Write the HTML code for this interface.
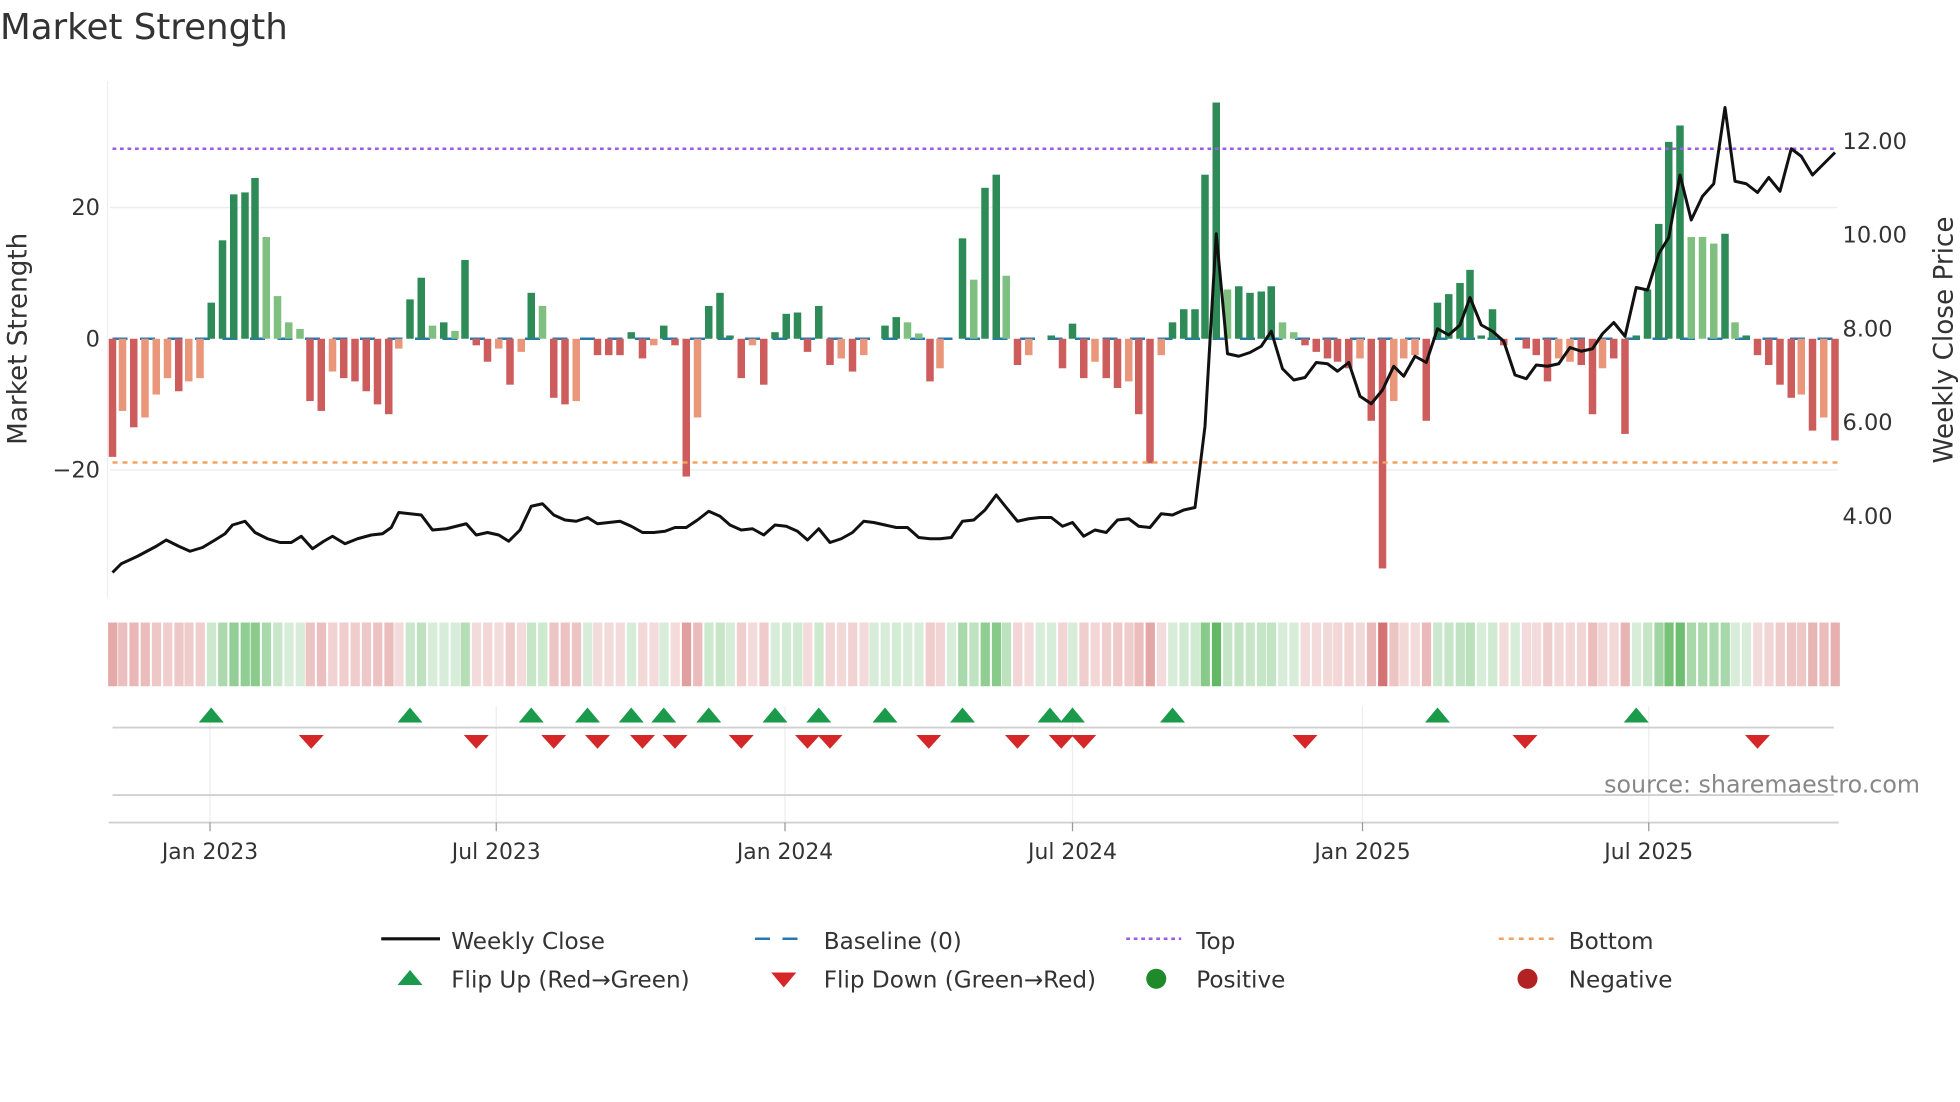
<!DOCTYPE html>
<html><head><meta charset="utf-8"><style>
html,body{margin:0;padding:0;background:#fff;}
svg{display:block;font-family:"DejaVu Sans","Liberation Sans",sans-serif;}
</style></head><body>
<svg id="s" width="1960" height="1102" viewBox="0 0 1568 881.6" xmlns="http://www.w3.org/2000/svg">
<rect width="1568" height="882" fill="#fff"/>
<text x="0" y="31" font-size="28.5" fill="#333">Market Strength</text>
<line x1="86" y1="65" x2="86" y2="478" stroke="#eee" stroke-width="1"/>
<line x1="88" y1="166" x2="1470" y2="166" stroke="#eee" stroke-width="1.2"/>
<line x1="88" y1="376" x2="1470" y2="376" stroke="#eee" stroke-width="1.2"/>
<line x1="90" y1="271" x2="1470" y2="271" stroke="#2878b0" stroke-width="2" stroke-dasharray="12,10"/>
<g id="bars"></g>
<line x1="90" y1="119" x2="1470" y2="119" stroke="#9b5de5" stroke-width="2" stroke-dasharray="3,3"/>
<line x1="90" y1="370" x2="1470" y2="370" stroke="#f4a261" stroke-width="2" stroke-dasharray="4,4"/>
<polyline id="price" fill="none" stroke="#111" stroke-width="2.4" stroke-linejoin="round"/>
<g font-size="18" fill="#333">
<text x="80" y="172" text-anchor="end">20</text>
<text x="80" y="277" text-anchor="end">0</text>
<text x="80" y="382" text-anchor="end">−20</text>
<text x="1474" y="119">12.00</text>
<text x="1474" y="194">10.00</text>
<text x="1474" y="269">8.00</text>
<text x="1474" y="344">6.00</text>
<text x="1474" y="419">4.00</text>
</g>
<text transform="translate(21,271) rotate(-90)" font-size="21" fill="#333" text-anchor="middle">Market Strength</text>
<text transform="translate(1562,272) rotate(-90)" font-size="21" fill="#333" text-anchor="middle">Weekly Close Price</text>
<g id="heat"></g>
<g stroke="#eee" stroke-width="1">
<line x1="168" y1="565" x2="168" y2="658"/><line x1="397" y1="565" x2="397" y2="658"/>
<line x1="628" y1="565" x2="628" y2="658"/><line x1="858" y1="565" x2="858" y2="658"/>
<line x1="1090" y1="565" x2="1090" y2="658"/><line x1="1319" y1="565" x2="1319" y2="658"/>
</g>
<line x1="90" y1="582" x2="1467" y2="582" stroke="#d0d0d0" stroke-width="1.5"/>
<line x1="90" y1="636" x2="1467" y2="636" stroke="#d0d0d0" stroke-width="1.5"/>
<line x1="87" y1="658" x2="1471" y2="658" stroke="#d0d0d0" stroke-width="1.5"/>
<g stroke="#999" stroke-width="1">
<line x1="168" y1="658" x2="168" y2="665"/><line x1="397" y1="658" x2="397" y2="665"/>
<line x1="628" y1="658" x2="628" y2="665"/><line x1="858" y1="658" x2="858" y2="665"/>
<line x1="1090" y1="658" x2="1090" y2="665"/><line x1="1319" y1="658" x2="1319" y2="665"/>
</g>
<g id="flips"></g>
<g font-size="17.5" fill="#333" text-anchor="middle">
<text x="168" y="687">Jan 2023</text><text x="397" y="687">Jul 2023</text>
<text x="628" y="687">Jan 2024</text><text x="858" y="687">Jul 2024</text>
<text x="1090" y="687">Jan 2025</text><text x="1319" y="687">Jul 2025</text>
</g>
<text x="1536" y="634" font-size="19" fill="#888" text-anchor="end">source: sharemaestro.com</text>
<g font-size="18.5" fill="#333">
<line x1="305" y1="751" x2="352" y2="751" stroke="#111" stroke-width="2.5"/>
<text x="361" y="759">Weekly Close</text>
<line x1="604" y1="751" x2="648" y2="751" stroke="#2878b0" stroke-width="2" stroke-dasharray="12,10"/>
<text x="659" y="759">Baseline (0)</text>
<line x1="901" y1="751" x2="945" y2="751" stroke="#9b5de5" stroke-width="2" stroke-dasharray="3,3"/>
<text x="957" y="759">Top</text>
<line x1="1199" y1="751" x2="1243" y2="751" stroke="#f4a261" stroke-width="2" stroke-dasharray="4,4"/>
<text x="1255" y="759">Bottom</text>
<polygon points="328,776 338,788 318,788" fill="#1a9a4a"/>
<text x="361" y="790">Flip Up (Red→Green)</text>
<polygon points="617,778 637,778 627,790" fill="#d62728"/>
<text x="659" y="790">Flip Down (Green→Red)</text>
<circle cx="925" cy="783" r="8" fill="#1f8a2a"/>
<text x="957" y="790">Positive</text>
<circle cx="1222" cy="783" r="8" fill="#b22222"/>
<text x="1255" y="790">Negative</text>
</g>
</svg>
<script>
var B=[[90,-18],[98,-11,1],[107,-13.5],[116,-12,1],[125,-8.5,1],[134,-6,1],[143,-8],[151,-6.5,1],[160,-6,1],[169,5.5],[178,15],[187,22],[196,22.3],[204,24.5],[213,15.5,1],[222,6.5,1],[231,2.5,1],[240,1.5,1],[248,-9.5],[257,-11],[266,-5,1],[275,-6],[284,-6.5],[293,-8],[302,-10],[311,-11.5],[319,-1.5,1],[328,6],[337,9.3],[346,2,1],[355,2.5],[364,1.2,1],[372,12],[381,-1],[390,-3.5],[399,-1.5,1],[408,-7],[417,-2,1],[425,7],[434,5,1],[443,-9],[452,-10],[461,-9.5,1],[470,0],[478,-2.5],[487,-2.5],[496,-2.5],[505,1],[514,-3],[523,-1,1],[531,2],[540,-1],[549,-21],[558,-12,1],[567,5],[576,7],[584,0.5],[593,-6],[602,-1,1],[611,-7],[620,1],[629,3.8],[638,4],[646,-2],[655,5],[664,-4],[673,-3,1],[682,-5],[691,-2.5,1],[699,0],[708,2],[717,3.3],[726,2.5,1],[735,0.8,1],[744,-6.5],[752,-4.5,1],[761,0],[770,15.3],[779,9,1],[788,23],[797,25],[805,9.6,1],[814,-4],[823,-2.5,1],[832,0],[841,0.5],[850,-4.5],[858,2.3],[867,-6],[876,-3.5,1],[885,-6],[894,-7.5],[903,-6.5,1],[911,-11.5],[920,-19],[929,-2.5,1],[938,2.5],[947,4.5],[956,4.5],[964,25],[973,36],[982,7.5,1],[991,8],[1000,7],[1009,7.2],[1017,8],[1026,2.5,1],[1035,1,1],[1044,-1],[1053,-2],[1062,-3],[1070,-3.5],[1079,-4.5],[1088,-3,1],[1097,-12.5],[1106,-35],[1115,-9.5,1],[1123,-3,1],[1132,-2.5,1],[1141,-12.5],[1150,5.5],[1159,6.8],[1168,8.5],[1176,10.5],[1185,0.5],[1194,4.5],[1203,-1],[1212,0],[1221,-1.5],[1229,-2.5],[1238,-6.5],[1247,-3,1],[1256,-3.5,1],[1265,-4],[1274,-11.5],[1282,-4.5,1],[1291,-3],[1300,-14.5],[1309,0.5],[1318,7.5],[1327,17.5],[1335,30],[1344,32.5],[1353,15.5,1],[1362,15.5,1],[1371,14.5,1],[1380,16],[1388,2.5,1],[1397,0.5],[1406,-2.5],[1415,-4],[1424,-7],[1433,-9],[1441,-8.5,1],[1450,-14],[1459,-12,1],[1468,-15.5]];
var ns="http://www.w3.org/2000/svg",g=document.getElementById('bars'),h=document.getElementById('heat');
function el(p,t,a){var e=document.createElementNS(ns,t);for(var k in a)e.setAttribute(k,a[k]);p.appendChild(e);}
B.forEach(function(b){var x=b[0],v=b[1],l=b[2];if(v!=0){var y=271-v*5.25;
var c=v>0?(l?'#7fbf7f':'#2e8b57'):(l?'#e9967a':'#cd5c5c');
el(g,'rect',{x:x-3,y:Math.min(y,271),width:6,height:Math.abs(y-271),fill:c});}
var a=0.18+0.7*Math.min(Math.abs(v)/36,1);if(Math.abs(v)<3)a=0.22;
el(h,'rect',{x:x-3.5,y:498,width:7.4,height:51,fill:v>=0?'#4caf50':'#cd5c5c','fill-opacity':a});});
var P="90,458 97,451 110,445 125,437 133,432 143,437 152,441 162,438 172,432 180,427 186,420 196,417 204,426 214,431 224,434 233,434 241,429 250,439 259,433 266,429 276,435 286,431 297,428 306,427 313,422 319,410 328,411 337,412 346,424 357,423 365,421 373,419 381,428 390,426 399,428 407,433 416,424 425,405 434,403 443,412 452,416 461,417 470,414 478,419 487,418 496,417 505,421 514,426 523,426 532,425 540,422 549,422 558,416 567,409 576,413 584,420 593,424 602,423 611,428 620,420 629,421 638,425 646,432 655,423 664,434 673,431 682,426 691,417 699,418 708,420 717,422 726,422 735,430 744,431 752,431 761,430 770,417 779,416 788,408 797,396 805,406 814,417 823,415 832,414 841,414 850,421 858,418 867,429 876,424 885,426 894,416 903,415 911,421 920,422 929,411 938,412 947,408 956,406 964,341 973,187 982,283 991,285 1000,282 1009,277 1017,265 1026,295 1035,304 1044,302 1053,290 1062,291 1070,297 1079,290 1088,317 1097,323 1106,312 1115,293 1123,301 1132,285 1141,290 1150,263 1159,268 1168,260 1176,238 1185,260 1194,265 1203,273 1212,300 1221,303 1229,292 1238,293 1247,291 1256,278 1265,281 1274,279 1282,267 1291,258 1300,269 1309,230 1318,232 1327,203 1335,190 1344,140 1353,176 1362,157 1371,147 1380,86 1388,145 1397,147 1406,154 1415,142 1424,153 1433,119 1441,125 1450,140 1459,131 1468,122";
document.getElementById('price').setAttribute('points',P);
var f=document.getElementById('flips');
[169,328,425,470,505,531,567,620,655,708,770,840,858,938,1150,1309].forEach(function(x){el(f,'polygon',{points:(x)+',566 '+(x+10)+',578 '+(x-10)+',578',fill:'#1a9a4a'});});
[249,381,443,478,514,540,593,646,664,743,814,849,867,1044,1220,1406].forEach(function(x){el(f,'polygon',{points:(x-10)+',588 '+(x+10)+',588 '+x+',599',fill:'#d62728'});});
</script>
</body></html>
